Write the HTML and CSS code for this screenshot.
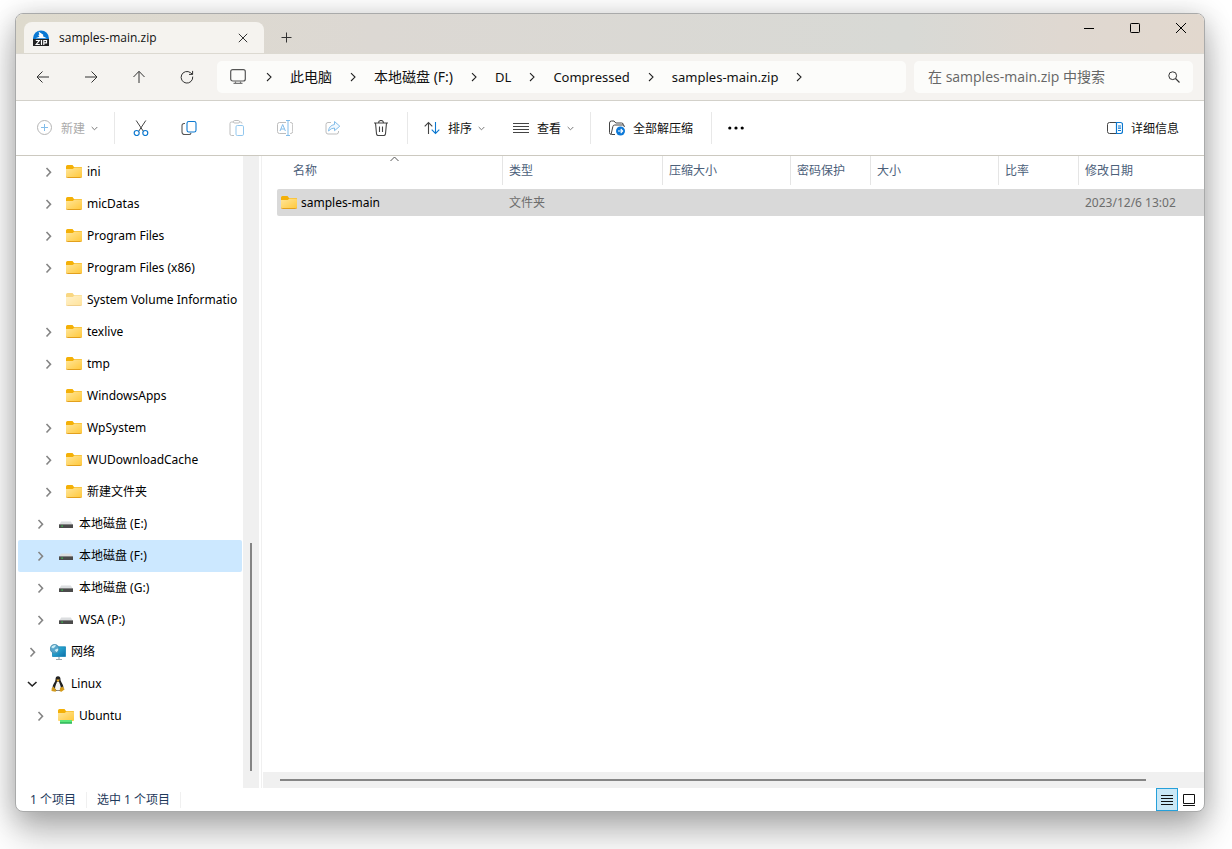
FILE: index.html
```html
<!DOCTYPE html>
<html lang="zh-CN">
<head>
<meta charset="utf-8">
<title>samples-main.zip</title>
<link rel="stylesheet" href="styles.css">
</head>
<body>
<svg class="defs" aria-hidden="true">
  <defs>
    <linearGradient id="gold" x1="0" y1="0" x2="1" y2="1"><stop offset="0" stop-color="#ffe69b"/><stop offset="1" stop-color="#ffc83a"/></linearGradient>
    <linearGradient id="screen" x1="0" y1="0" x2="1" y2="1"><stop offset="0" stop-color="#35c3e6"/><stop offset="1" stop-color="#0f6fa8"/></linearGradient>
  </defs>
  <symbol id="chev" viewBox="0 0 16 16"><path d="M6.500 4l4 4.200-4 4.300" fill="none" stroke="#858585" stroke-width="1.600"/></symbol>
  <symbol id="chev-open" viewBox="0 0 16 16"><path d="M4 6l4.200 4L12.500 6" fill="none" stroke="#222" stroke-width="1.600"/></symbol>
  <symbol id="crumb" viewBox="0 0 6 10"><path d="M1 1.200l4 3.900-4 3.900" fill="none" stroke="#222" stroke-width="1.100"/></symbol>
  <symbol id="caret" viewBox="0 0 7 5"><path d="M.7 1l2.800 2.800L6.300 1" fill="none" stroke="#777" stroke-width="1"/></symbol>
  <symbol id="folder" viewBox="0 0 16 16"><path d="M0 2.500Q0 1 1.500 1h5L8 3h7q1 0 1 1v4H0z" fill="#f4b007"/><path d="M0 5h6.700L8.500 3.500H15q1 0 1 1V12.500q0 1-1 1H1q-1 0-1-1z" fill="url(#gold)"/><path d="M.3 13q.3.500 1 .5h13.400q.7 0 1-.5" fill="none" stroke="#e3a01c"/></symbol>
  <symbol id="drive" viewBox="0 0 16 16"><path d="M3.200 5.500h9.600L15 9H1z" fill="#dcdee0"/><path d="M1 8.500h14V12H1z" fill="#4b4b4b"/><path d="M1 8.500h14" stroke="#777" stroke-width=".6"/><path d="M3.500 9.500h1.200v1.200H3.500z" fill="#36e04d"/></symbol>
  <symbol id="network" viewBox="0 0 16 16"><path d="M9 13v2M6 15.500h6" stroke="#9aa9b0" stroke-width="1.200"/><path d="M2.500 2.800h13v9.700h-13z" fill="url(#screen)" stroke="#1787b8" stroke-width=".8"/><circle cx="4.600" cy="4.800" r="4.500" fill="#58a6cc"/><path d="M1 3q2-2.500 5-2l-1 2-2 1.500zM4.500 6l3-1.500 1 1-1.500 3z" fill="#c9edf5"/><circle cx="4.600" cy="4.800" r="4.300" fill="none" stroke="#4386a5" stroke-width=".6"/></symbol>
  <symbol id="linux" viewBox="0 0 16 16"><path d="M8 .3c2 0 2.500 1.500 2.500 3.500 0 2 3 4.500 3 8L11 15H5l-2.500-3.500c0-3 3-5.500 3-7.700C5.500 1.800 6 .3 8 .3z" fill="#222"/><path d="M7 5.800h2c.5 2 2 4.200 2 7.200L9.500 14.500h-3L5 12.500c0-2.500 1.500-4.700 2-6.700z" fill="#f5f5f2"/><path d="M6.500 3.500h3.200L8.500 5.800 7 5.300z" fill="#f0ad22"/><path d="M3.300 10.500l3.200 3.700L5.500 15.800l-4-.9.200-2.600zM12.500 10.500l2.200 2.800-3.200 2.500-1.800-.5.300-3.300z" fill="#d39a1b"/></symbol>
  <symbol id="ubuntu" viewBox="0 0 16 16"><path d="M0 2.500Q0 1 1.500 1h5L8 3h7q1 0 1 1v3H0z" fill="#f4b007"/><path d="M0 5h6.700L8.500 3.500H15q1 0 1 1V12q0 1-1 1H1q-1 0-1-1z" fill="url(#gold)"/><path d="M2 12h12v3.500H2z" fill="#5be67a"/><path d="M2 15h12" stroke="#159b43"/></symbol>
</svg>

<main class="window">
  <header class="titlebar">
    <div class="tab">
      <svg class="i16" viewBox="0 0 16 16"><path d="M0 8.500a8 8 0 0 1 16 0V9H0z" fill="#0878d4"/><path d="M5.500 1.500l4.800 3.200-.3 1.500 3.800 2H2.500l3.900-1.500-1.200-1.800 1.200-.3z" fill="#fff"/><path d="M0 9h16v7H0z" fill="#222"/><path d="M2.800 10.500h3.500L3.200 14.500h3.600M8.500 10v5M10.800 15v-4.500h2.700v2.300h-2.700" fill="none" stroke="#fff" stroke-width="1.200"/></svg>
      <span class="tab-name">samples-main.zip</span>
      <button class="plain" aria-label="关闭标签页"><svg width="10" height="10" viewBox="0 0 10 10"><path d="M.8.800l8.400 8.400M9.200.800L.8 9.200" stroke="#333" stroke-width="1"/></svg></button>
    </div>
    <button class="plain add" aria-label="新标签页"><svg width="11" height="11" viewBox="0 0 11 11"><path d="M5.500.500v10M.5 5.500h10" stroke="#333"/></svg></button>
    <div class="controls">
      <button class="plain" aria-label="最小化"><svg width="12" height="12" viewBox="0 0 12 12"><path d="M1 6.500h10" stroke="#000"/></svg></button>
      <button class="plain" aria-label="最大化"><svg width="12" height="12" viewBox="0 0 12 12"><rect x="1.500" y="1.500" width="9" height="9" rx=".8" fill="none" stroke="#000"/></svg></button>
      <button class="plain" aria-label="关闭"><svg width="12" height="12" viewBox="0 0 12 12"><path d="M1 1l10 10M11 1L1 11" stroke="#000"/></svg></button>
    </div>
  </header>

  <nav class="nav">
    <button class="plain step" aria-label="后退"><svg class="i16" viewBox="0 0 16 16"><path d="M14 8H2.500M7.500 2.500L2 8l5.500 5.500"/></svg></button>
    <button class="plain step" aria-label="前进"><svg class="i16" viewBox="0 0 16 16"><path d="M2 8h11.500M8.500 2.500L14 8l-5.500 5.500"/></svg></button>
    <button class="plain step" aria-label="向上"><svg class="i16" viewBox="0 0 16 16"><path d="M8 14V2.500M2.500 8L8 2.300 13.500 8"/></svg></button>
    <button class="plain step" aria-label="刷新"><svg class="i16" viewBox="0 0 16 16"><path d="M13.700 7.600A5.800 5.800 0 1 1 11.500 3.700l2 1.600M13.600 1.900v3.500H10"/></svg></button>
    <div class="address">
      <svg class="i16 pc" viewBox="0 0 16 16"><rect x=".7" y=".7" width="14.600" height="11.300" rx="2" fill="none" stroke="#555" stroke-width="1.200"/><path d="M5.500 12.500v2M10.500 12.500v2M3.500 14.300h9" stroke="#777" stroke-width="1.200"/></svg>
      <svg class="sep"><use href="#crumb"/></svg><a href="#">此电脑</a>
      <svg class="sep"><use href="#crumb"/></svg><a href="#">本地磁盘 (F:)</a>
      <svg class="sep"><use href="#crumb"/></svg><a href="#" class="latin">DL</a>
      <svg class="sep"><use href="#crumb"/></svg><a href="#" class="latin">Compressed</a>
      <svg class="sep"><use href="#crumb"/></svg><a href="#" class="latin">samples-main.zip</a>
      <svg class="sep"><use href="#crumb"/></svg>
    </div>
    <label class="search">
      <input type="text" placeholder="在 samples-main.zip 中搜索" aria-label="搜索">
      <svg width="12" height="12" viewBox="0 0 12 12"><circle cx="4.700" cy="4.700" r="3.900" fill="none" stroke="#333"/><path d="M7.500 7.500l4 4" stroke="#333" stroke-width="1.100"/></svg>
    </label>
  </nav>

  <div class="toolbar">
    <button class="tool text off" disabled><svg class="i16" viewBox="0 0 16 16"><circle cx="7.500" cy="7.500" r="7" fill="none" stroke="#b5b5b5"/><path d="M7.500 4v7M4 7.500h7" stroke="#83bdea"/></svg><span>新建</span><svg class="caret"><use href="#caret"/></svg></button>
    <i class="rule"></i>
    <button class="tool icon" aria-label="剪切"><svg class="i16" viewBox="0 0 16 16"><path d="M3.200.500l7.300 11M12.800.500l-7.300 11" stroke="#444" fill="none"/><circle cx="3.700" cy="13" r="2.500" fill="none" stroke="#0b78d0" stroke-width="1.200"/><circle cx="12.300" cy="13" r="2.500" fill="none" stroke="#0b78d0" stroke-width="1.200"/></svg></button>
    <button class="tool icon" aria-label="复制"><svg class="i16" viewBox="0 0 16 16"><path d="M4 3.500H3A2 2 0 0 0 1 5.500V12a2.500 2.500 0 0 0 2.500 2.500H8a2 2 0 0 0 2-1.700" fill="none" stroke="#555" stroke-width="1.100"/><rect x="6" y="1.500" width="9" height="10.500" rx="1.800" fill="#fff" stroke="#0b78d0" stroke-width="1.100"/></svg></button>
    <button class="tool icon" aria-label="粘贴" disabled><svg class="i16" viewBox="0 0 16 16"><path d="M5 2H2.500A1.500 1.500 0 0 0 1 3.500v10.500A1.500 1.500 0 0 0 2.500 15.500H5M10 2h1.500A1.500 1.500 0 0 1 13 3.500" fill="none" stroke="#bdbdbd"/><rect x="4.500" y=".5" width="6" height="2.500" rx="1.200" fill="#fff" stroke="#bdbdbd"/><rect x="7" y="5.500" width="7.500" height="10" rx="1.300" fill="#fff" stroke="#92c7ee"/></svg></button>
    <button class="tool icon" aria-label="重命名" disabled><svg class="i16" viewBox="0 0 16 16"><path d="M9 2.500H2.500a2 2 0 0 0-2 2v7a2 2 0 0 0 2 2H9M13 2.500h.7a2 2 0 0 1 2 2v7a2 2 0 0 1-2 2H13" fill="none" stroke="#bdbdbd"/><path d="M9 .5h4M11 .5v15M9 15.500h4M3 11l2.700-6.500L8.400 11M4 9h3.500" fill="none" stroke="#83bdea"/></svg></button>
    <button class="tool icon" aria-label="共享" disabled><svg class="i16" viewBox="0 0 16 16"><path d="M6 2.500H3a2 2 0 0 0-2 2V12a2 2 0 0 0 2 2h8.500a2 2 0 0 0 2-2v-1" fill="none" stroke="#bdbdbd"/><path d="M9.500 1.500l5.300 4.700-5.300 4.500V8Q6 8 3.500 11q.5-5.500 6-6.500z" fill="#f2f9ff" stroke="#83bdea" stroke-linejoin="round"/></svg></button>
    <button class="tool icon" aria-label="删除"><svg class="i16" viewBox="0 0 16 16"><path d="M1 3h14M5.500 3a2.500 2.500 0 0 1 5 0M2.500 3l1 10.800a1.700 1.700 0 0 0 1.700 1.700h5.600a1.700 1.700 0 0 0 1.700-1.700l1-10.800M6.500 6.500v5.500M9.500 6.500v5.500" fill="none" stroke="#444" stroke-width="1.100"/></svg></button>
    <i class="rule"></i>
    <button class="tool text"><svg class="i16" viewBox="0 0 16 16"><path d="M4.500 14V2.500M.7 6.300l3.800-3.800 3.800 3.800" fill="none" stroke="#444" stroke-width="1.100"/><path d="M11.500 2v11.500M7.700 9.700l3.800 3.800 3.800-3.800" fill="none" stroke="#0b78d0" stroke-width="1.100"/></svg><span>排序</span><svg class="caret"><use href="#caret"/></svg></button>
    <button class="tool text"><svg class="i16" viewBox="0 0 16 16"><path d="M0 3.500h16M0 6.500h16M0 9.500h16M0 12.500h16" stroke="#444"/></svg><span>查看</span><svg class="caret"><use href="#caret"/></svg></button>
    <i class="rule"></i>
    <button class="tool text wide"><svg class="i16" viewBox="0 0 16 16"><path d="M6 14.500H2.500a2 2 0 0 1-2-2V3a2 2 0 0 1 2-2H5l1.800 2h5.700a1.700 1.700 0 0 1 1.700 2M2.200 14l1.600-7.300A2 2 0 0 1 5.700 5h8q2 0 1.600 2" fill="none" stroke="#444"/><circle cx="11.500" cy="11" r="4.500" fill="#0b78d8"/><path d="M9 11h4.700M11.700 8.900l2 2.100-2 2.100" fill="none" stroke="#fff" stroke-width="1.100"/></svg><span>全部解压缩</span></button>
    <i class="rule"></i>
    <button class="tool text" aria-label="更多"><svg class="i16" viewBox="0 0 16 16"><circle cx="1.800" cy="8" r="1.600"/><circle cx="8" cy="8" r="1.600"/><circle cx="14.200" cy="8" r="1.600"/></svg></button>
    <button class="tool text details"><svg class="i16" viewBox="0 0 16 16"><path d="M9.500 2.500h-7a2 2 0 0 0-2 2v7a2 2 0 0 0 2 2h7" fill="none" stroke="#444"/><path d="M9.500 2.500h4a2 2 0 0 1 2 2v7a2 2 0 0 1-2 2h-4zM11 6h3M11 8.200h3M11 10.500h3" fill="none" stroke="#0b78d0" stroke-width="1.200"/></svg><span>详细信息</span></button>
  </div>

  <div class="body">
    <aside class="side">
      <ul class="tree">
        <li><a href="#" class="l2"><svg><use href="#chev"/></svg><svg><use href="#folder"/></svg><span>ini</span></a></li>
        <li><a href="#" class="l2"><svg><use href="#chev"/></svg><svg><use href="#folder"/></svg><span>micDatas</span></a></li>
        <li><a href="#" class="l2"><svg><use href="#chev"/></svg><svg><use href="#folder"/></svg><span>Program Files</span></a></li>
        <li><a href="#" class="l2"><svg><use href="#chev"/></svg><svg><use href="#folder"/></svg><span>Program Files (x86)</span></a></li>
        <li><a href="#" class="l2 faded"><svg></svg><svg><use href="#folder"/></svg><span>System Volume Informatio</span></a></li>
        <li><a href="#" class="l2"><svg><use href="#chev"/></svg><svg><use href="#folder"/></svg><span>texlive</span></a></li>
        <li><a href="#" class="l2"><svg><use href="#chev"/></svg><svg><use href="#folder"/></svg><span>tmp</span></a></li>
        <li><a href="#" class="l2"><svg></svg><svg><use href="#folder"/></svg><span>WindowsApps</span></a></li>
        <li><a href="#" class="l2"><svg><use href="#chev"/></svg><svg><use href="#folder"/></svg><span>WpSystem</span></a></li>
        <li><a href="#" class="l2"><svg><use href="#chev"/></svg><svg><use href="#folder"/></svg><span>WUDownloadCache</span></a></li>
        <li><a href="#" class="l2"><svg><use href="#chev"/></svg><svg><use href="#folder"/></svg><span>新建文件夹</span></a></li>
        <li><a href="#" class="l1"><svg><use href="#chev"/></svg><svg><use href="#drive"/></svg><span>本地磁盘 (E:)</span></a></li>
        <li><a href="#" class="l1 selected"><svg><use href="#chev"/></svg><svg><use href="#drive"/></svg><span>本地磁盘 (F:)</span></a></li>
        <li><a href="#" class="l1"><svg><use href="#chev"/></svg><svg><use href="#drive"/></svg><span>本地磁盘 (G:)</span></a></li>
        <li><a href="#" class="l1"><svg><use href="#chev"/></svg><svg><use href="#drive"/></svg><span>WSA (P:)</span></a></li>
        <li><a href="#" class="l0"><svg><use href="#chev"/></svg><svg><use href="#network"/></svg><span>网络</span></a></li>
        <li><a href="#" class="l0"><svg><use href="#chev-open"/></svg><svg><use href="#linux"/></svg><span>Linux</span></a></li>
        <li><a href="#" class="l1"><svg><use href="#chev"/></svg><svg><use href="#ubuntu"/></svg><span>Ubuntu</span></a></li>
      </ul>
      <div class="vbar"><div class="vthumb"></div></div>
    </aside>
    <section class="files">
      <table>
        <colgroup><col class="c-name"><col class="c-type"><col class="c-packed"><col class="c-pass"><col class="c-size"><col class="c-ratio"><col></colgroup>
        <thead><tr>
          <th><div class="first">名称<svg class="sort" width="9" height="6" viewBox="0 0 9 6"><path d="M.5 5l4-4 4 4" fill="none" stroke="#555"/></svg></div></th>
          <th><div>类型</div></th><th><div>压缩大小</div></th><th><div>密码保护</div></th><th><div>大小</div></th><th><div>比率</div></th><th><div class="last">修改日期</div></th>
        </tr></thead>
        <tbody><tr>
          <td class="name"><div><svg class="i16"><use href="#folder"/></svg><span>samples-main</span></div></td>
          <td>文件夹</td><td></td><td></td><td></td><td></td><td class="date">2023/12/6 13:02</td>
        </tr></tbody>
      </table>
      <div class="hbar"><div class="hthumb"></div></div>
    </section>
  </div>

  <footer class="status">
    <span>1 个项目</span><span>选中 1 个项目</span>
    <div class="views">
      <button class="plain on" aria-label="详细信息视图"><svg width="12" height="12" viewBox="0 0 12 12"><path d="M0 1.500h12M0 4.500h12M0 7.500h12M0 10.500h12" stroke="#111"/></svg></button>
      <button class="plain" aria-label="大图标视图"><svg width="12" height="12" viewBox="0 0 12 12"><path d="M.5.500h11v9H.500zM0 11.500h12" fill="none" stroke="#111"/></svg></button>
    </div>
  </footer>
</main>
</body>
</html>
```
FILE: styles.css
```css
* { box-sizing: border-box; }

body {
  margin: 0;
  height: 100vh;
  padding: 13px 27px 37px 15px;
  display: flex;
  overflow: hidden;
  background: #fff;
  color: #111;
  font: 12px/16px "Noto Sans", "Noto Sans CJK SC", sans-serif;
}

.defs { position: absolute; width: 0; height: 0; }
a { color: inherit; text-decoration: none; }
button, input { font: inherit; color: inherit; }
svg { display: block; flex: none; }
.i16 { width: 16px; height: 16px; }

.window {
  flex: 1;
  min-width: 0;
  display: flex;
  flex-direction: column;
  border: 1px solid #a9aaaa;
  border-radius: 8px;
  overflow: hidden;
  background: #fff;
  box-shadow: 0 24px 36px rgba(0, 0, 0, 0.22), 0 4px 28px rgba(0, 0, 0, 0.24);
}

.plain {
  display: flex;
  align-items: center;
  justify-content: center;
  padding: 0;
  border: 0;
  background: none;
}

/* Title bar */
.titlebar {
  display: flex;
  height: 40px;
  background: linear-gradient(90deg, #dedacd, #dcd8d3 30%, #d8d9d5 75%, #dfd8d1 88%, #e2d8ce);
  border-bottom: 1px solid #dcd9d1;
}
.tab {
  display: flex;
  align-items: center;
  width: 240px;
  margin: 8px 0 0 8px;
  padding: 0 16px 0 9px;
  border-radius: 8px 8px 0 0;
  background: #f5f3ef;
}
.tab-name { flex: 1; margin-left: 10px; font-family: "Open Sans", sans-serif; }
.add { width: 44px; padding-top: 8px; }
.controls { display: flex; margin-left: auto; height: 28px; }
.controls button { width: 46px; }

/* Address row */
.nav {
  display: flex;
  align-items: center;
  height: 47px;
  padding: 0 11px 0 3px;
  background: #f5f3f0;
  border-bottom: 1px solid #d3d1ca;
  font-size: 14px;
  line-height: 20px;
}
.step { width: 48px; height: 32px; }
.step path { fill: none; stroke: #333; stroke-width: 1; }
.address, .search {
  display: flex;
  align-items: center;
  height: 32px;
  border-radius: 5px;
  background: #fcfcfa;
}
.address {
  flex: 1;
  gap: 18px;
  margin: 0 8px 0 6px;
  padding-left: 13px;
  white-space: nowrap;
  overflow: hidden;
}
.pc { margin-right: 2px; }
.latin { font-size: 13px; }
.sep { width: 6px; height: 10px; }
.search { flex: 0 1 279px; padding: 0 13px 0 14px; }
.search input {
  flex: 1;
  min-width: 0;
  padding: 0;
  border: 0;
  outline: 0;
  background: none;
  font-family: "Open Sans", "Noto Sans CJK SC", sans-serif;
}
.search input::placeholder { color: #666; opacity: 1; }

/* Command bar */
.toolbar {
  display: flex;
  align-items: center;
  height: 55px;
  padding: 0 11px 0 7px;
  border-bottom: 1px solid #ccc9c0;
}
.tool {
  display: flex;
  align-items: center;
  justify-content: center;
  height: 32px;
  padding: 0;
  border: 0;
  background: none;
  white-space: nowrap;
}
.tool.icon { width: 48px; }
.tool.text { padding: 0 14px; }
.tool.wide { padding: 0 16px; }
.tool span { margin-left: 8px; padding-top: 2px; }
.tool.off { color: #aaa; }
.caret { width: 7px; height: 5px; margin-left: 6px; }
.rule { width: 1px; height: 32px; margin: 0 2px; background: #e8e8e8; }
.details { margin-left: auto; }

/* Body */
.body { flex: 1; display: flex; min-height: 0; }
.side {
  display: flex;
  width: 246px;
  padding-left: 2px;
  border-right: 1px solid #f0f0f0;
}
.tree {
  flex: 1;
  min-width: 0;
  margin: 0 1px 0 0;
  padding: 0;
  list-style: none;
}
.tree a {
  display: flex;
  align-items: center;
  height: 32px;
  border-radius: 2px;
  color: #000;
  white-space: nowrap;
  overflow: hidden;
}
.tree svg { width: 16px; height: 16px; }
.tree svg + svg { margin: 0 5px 0 10px; }
.l0 { padding-left: 6px; }
.l1 { padding-left: 14px; }
.l2 { padding-left: 22px; }
.selected { background: #cce8ff; }
.faded svg { opacity: 0.5; }
.vbar {
  display: flex;
  align-items: flex-end;
  width: 16px;
  margin-right: 2px;
  padding: 0 0 17px 7px;
  background: #f0f0f0;
}
.vthumb { width: 2px; height: 37%; background: #858585; }

.files {
  flex: 1;
  min-width: 0;
  display: flex;
  flex-direction: column;
  padding-left: 1px;
}
table {
  width: calc(100% - 14px);
  margin-left: 14px;
  table-layout: fixed;
  border-collapse: collapse;
}
.c-name { width: 226px; }
.c-type { width: 160px; }
.c-packed { width: 128px; }
.c-pass { width: 80px; }
.c-size { width: 128px; }
.c-ratio { width: 80px; }
th {
  padding: 0 0 4px;
  font-weight: 400;
  text-align: left;
  color: #4c607a;
}
th div {
  position: relative;
  height: 29px;
  padding: 7px 0 0 6px;
  border-right: 1px solid #e5e5e5;
}
th .first { padding-left: 16px; }
th .last { border-right: 0; }
.sort { position: absolute; left: 50%; top: 0; }
td {
  height: 27px;
  padding: 0 6px;
  background: #d9d9d9;
  color: #6d6d6d;
  white-space: nowrap;
}
td.name { padding: 0 4px; color: #000; border-radius: 2px 0 0 2px; }
td.name div { display: flex; align-items: center; gap: 4px; }
.hbar {
  display: flex;
  align-items: center;
  height: 16px;
  margin-top: auto;
  padding: 0 58px 0 17px;
  background: #f0f0f0;
}
.hthumb { flex: 1; height: 2px; background: #858585; }

/* Status bar */
.status {
  display: flex;
  align-items: center;
  height: 23px;
  padding-left: 4px;
  color: #1e395b;
}
.status span { padding: 0 10px; border-right: 1px solid #f0f0f0; }
.views { display: flex; align-self: stretch; margin-left: auto; padding-right: 4px; }
.views button { width: 22px; }
.views .on { border: 1px solid #26a0da; background: #cbe8f6; }
```
